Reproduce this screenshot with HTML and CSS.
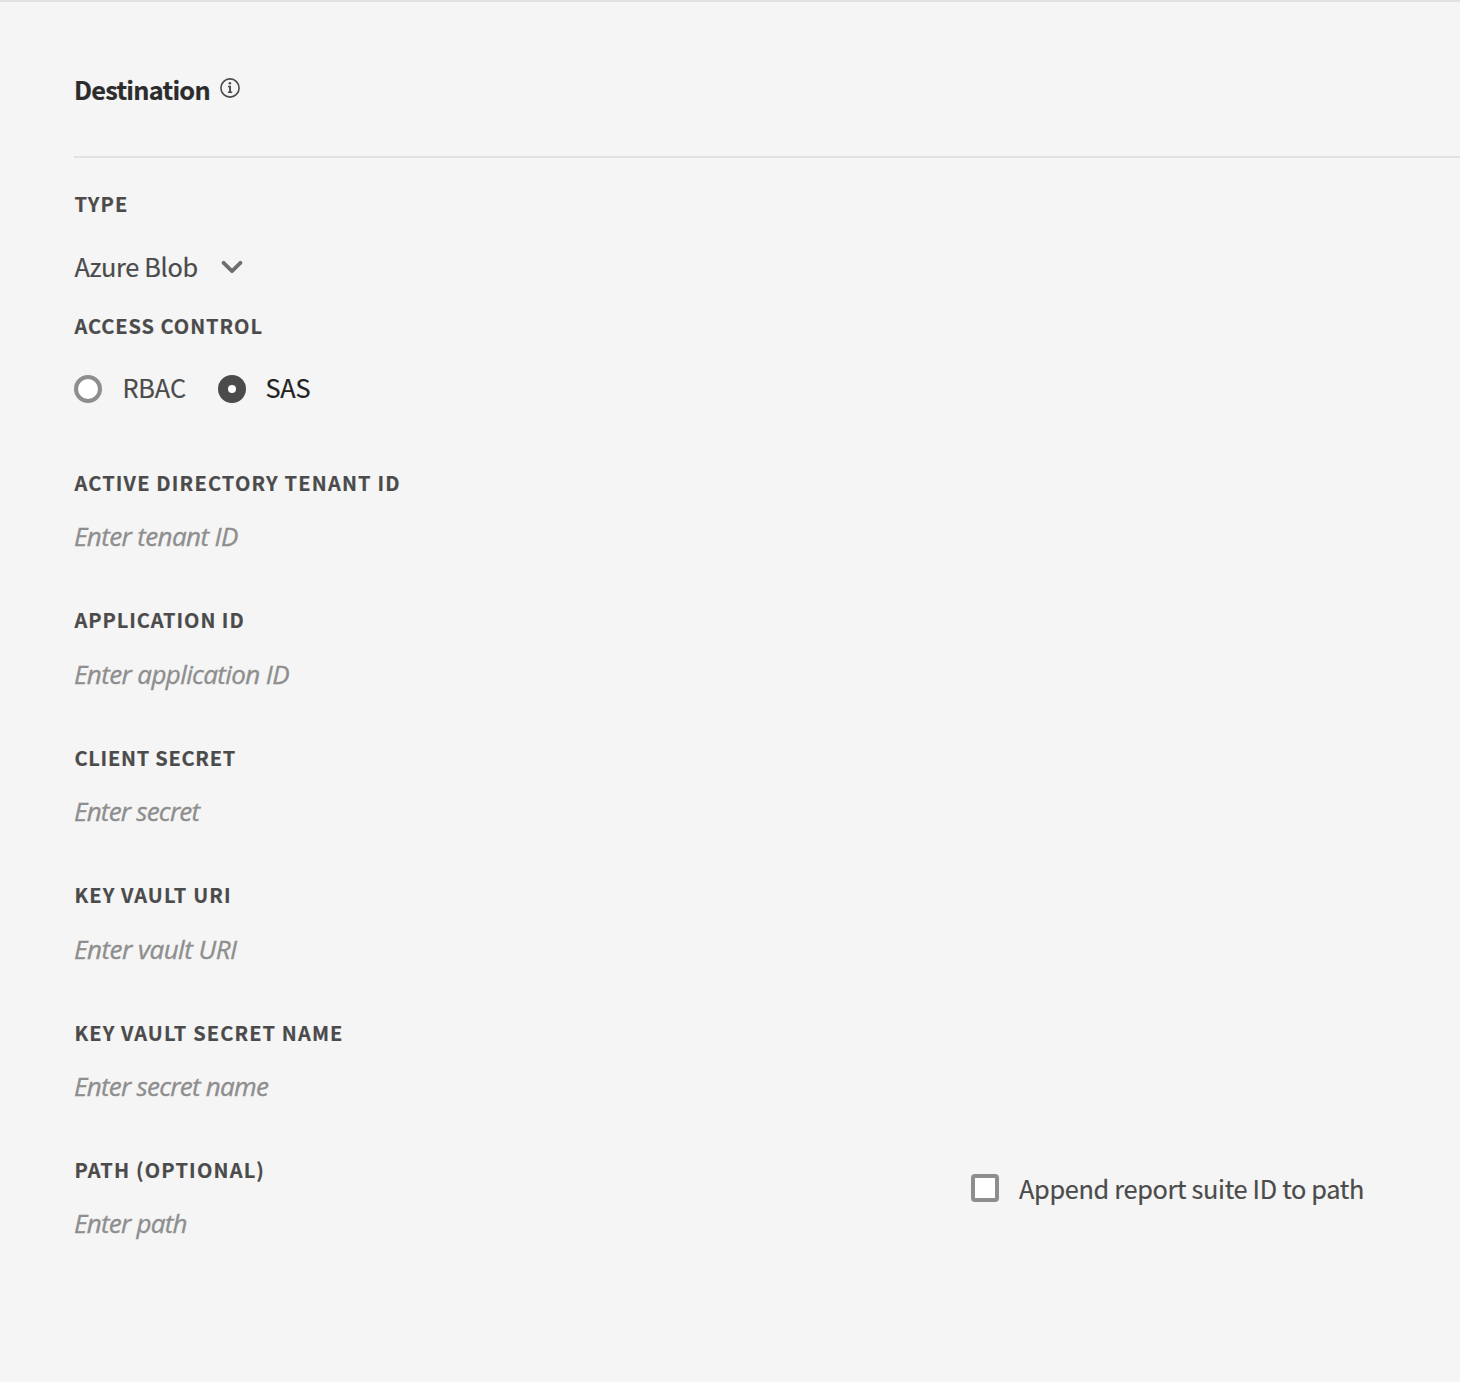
FILE: index.html
```html
<!DOCTYPE html>
<html lang="en">
<head>
<meta charset="utf-8">
<title>Destination</title>
<link rel="stylesheet" href="styles.css">
</head>
<body>
<main class="panel">
  <header class="panel-header">
    <h1 class="title">Destination</h1>
    <svg class="info" width="20" height="20" viewBox="0 0 20 20" aria-hidden="true">
      <circle cx="10" cy="10" r="9.1" fill="none" stroke="#4b4b4b" stroke-width="1.6"/>
      <circle cx="9.9" cy="5.3" r="1.25" fill="#4b4b4b"/>
      <path d="M8 8.4h2.1v5.8M7.9 14.2h4.3" fill="none" stroke="#4b4b4b" stroke-width="1.5"/>
      <path d="M9.3 8h1.7v6H9.3z" fill="#4b4b4b"/>
    </svg>
  </header>

  <section class="type">
    <h2 class="label wide">TYPE</h2>
    <div class="picker">
      <span class="picker-value">Azure Blob</span>
      <svg class="chevron" width="22" height="14" viewBox="0 0 22 14" aria-hidden="true">
        <path d="M2.6 2.8 11 11.1 19.4 2.8" fill="none" stroke="#6e6e6e" stroke-width="3.8" stroke-linecap="round" stroke-linejoin="round"/>
      </svg>
    </div>
  </section>

  <section class="access">
    <h2 class="label">ACCESS CONTROL</h2>
    <div class="radios">
      <div class="radio"><span class="dot"></span><span>RBAC</span></div>
      <div class="radio selected"><span class="dot"></span><span>SAS</span></div>
    </div>
  </section>

  <section class="fields">
    <div class="field"><h2 class="label wide">ACTIVE DIRECTORY TENANT ID</h2><p class="hint">Enter tenant ID</p></div>
    <div class="field"><h2 class="label">APPLICATION ID</h2><p class="hint">Enter application ID</p></div>
    <div class="field"><h2 class="label client">CLIENT SECRET</h2><p class="hint tight">Enter secret</p></div>
    <div class="field"><h2 class="label vault">KEY VAULT URI</h2><p class="hint loose">Enter vault URI</p></div>
    <div class="field"><h2 class="label vault">KEY VAULT SECRET NAME</h2><p class="hint snug">Enter secret name</p></div>
    <div class="field path">
      <div class="path-field"><h2 class="label wide">PATH (OPTIONAL)</h2><p class="hint snug">Enter path</p></div>
      <div class="check"><span class="box"></span><span class="check-text">Append report suite ID to path</span></div>
    </div>
  </section>
</main>
</body>
</html>
```
FILE: styles.css
```css
* { box-sizing: border-box; }

body {
  margin: 0;
  min-height: 1382px;
  background: #f5f5f5;
  color: #4b4b4b;
  font: 25.3px/36px "Noto Sans CJK JP", "Open Sans", sans-serif;
  -webkit-text-stroke: 0.2px;
}

h1, h2, p { margin: 0; }

.panel {
  border-top: 2px solid #e1e1e1;
  padding-left: 74px;
}

.panel-header {
  display: flex;
  align-items: flex-start;
  gap: 10px;
  height: 156px;
  padding-top: 69px;
  border-bottom: 2px solid #e1e1e1;
}

.title {
  width: 136px;
  color: #2c2c2c;
  font-size: 25.3px;
  font-weight: 700;
  line-height: 36px;
  letter-spacing: -0.75px;
  white-space: nowrap;
}

.info { display: block; margin-top: 7px; }

.label {
  padding-left: 0.4px;
  font-size: 20px;
  font-weight: 700;
  line-height: 30px;
  letter-spacing: 0.95px;
}
.label.wide { letter-spacing: 1.18px; }
.label.vault { letter-spacing: 1.12px; }
.label.client { letter-spacing: 0.74px; }

.type { height: 152px; padding-top: 31px; }

.picker {
  display: flex;
  gap: 23px;
  margin-top: 29px;
}
.picker-value { width: 124px; padding-left: 0.4px; letter-spacing: -0.3px; white-space: nowrap; }
.chevron { margin-top: 12px; }

.access { height: 157px; padding-top: 1px; }

.radios {
  display: flex;
  gap: 32px;
  margin-top: 28px;
}
.radio {
  display: flex;
  gap: 20.4px;
  letter-spacing: -0.1px;
}
.radio.selected { gap: 19.5px; color: #222; letter-spacing: -0.2px; }

.dot {
  width: 28px;
  height: 28px;
  margin-top: 6px;
  border: 4px solid #8e8e8e;
  border-radius: 50%;
  background: #fff;
}
.selected .dot { border: 10px solid #4b4b4b; }

.field { height: 137.5px; padding-top: 0.5px; }

.hint {
  margin-top: 20.5px;
  color: #8e8e8e;
  font: italic 26px/36px "Open Sans", sans-serif;
  letter-spacing: -0.61px;
  -webkit-text-stroke: 0.35px;
}
.hint.loose { letter-spacing: -0.5px; }
.hint.snug { letter-spacing: -0.74px; }
.hint.tight { letter-spacing: -0.78px; }

.path { display: flex; }
.path-field { width: 897px; }
.path-field .hint { margin-top: 20px; }

.check {
  display: flex;
  gap: 20px;
  margin-top: 15px;
}
.check-text { letter-spacing: -0.325px; white-space: nowrap; }

.box {
  width: 28px;
  height: 28px;
  margin-top: 4px;
  border: 4px solid #8e8e8e;
  border-radius: 4px;
  background: #fff;
}
```
